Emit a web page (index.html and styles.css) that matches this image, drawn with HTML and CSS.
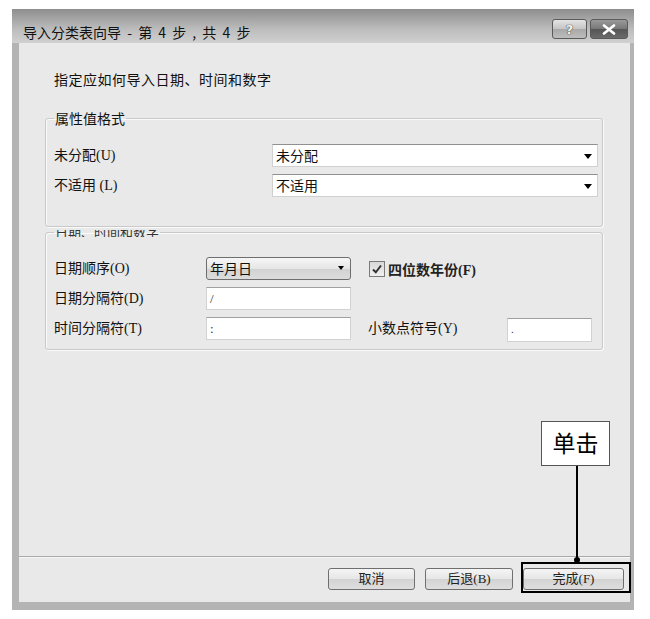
FILE: index.html
```html
<!DOCTYPE html>
<html lang="zh-CN">
<head>
<meta charset="utf-8">
<title>导入分类表向导</title>
<link rel="stylesheet" href="styles.css">
</head>
<body>
<div class="window">
  <div class="titlebar">
    <span class="title">导入分类表向导 - 第 4 步 , 共 4 步</span>
    <div class="title-btns">
      <span class="tbtn help">?</span>
      <span class="tbtn close"><svg width="14" height="11" viewBox="0 0 14 11"><path d="M2 1.5 L12 9.5 M12 1.5 L2 9.5" stroke="#fff" stroke-width="2.6" stroke-linecap="round"/></svg></span>
    </div>
  </div>
  <div class="content">
    <div class="main">
      <p class="heading">指定应如何导入日期、时间和数字</p>
      <fieldset class="group g1">
        <legend>属性值格式</legend>
        <div class="rows">
          <span class="label">未分配(U)</span>
          <div class="select">未分配<span class="arrow"></span></div>
          <span class="label">不适用 (L)</span>
          <div class="select">不适用<span class="arrow"></span></div>
        </div>
      </fieldset>
      <fieldset class="group g2">
        <legend><span class="clipped">日期、时间和数字</span></legend>
        <div class="grid">
          <span class="label">日期顺序(O)</span>
          <div class="combo">年月日<span class="arrow small"></span></div>
          <div class="check-wrap">
            <span class="checkbox"><svg width="12" height="12" viewBox="0 0 12 12"><path d="M2 6.5 L4.8 9.3 L10 2.5" fill="none" stroke="#333" stroke-width="2"/></svg></span>
            <span class="check-label">四位数年份(F)</span>
          </div>
          <span class="label">日期分隔符(D)</span>
          <div class="input">/</div>
          <span class="empty"></span>
          <span class="label">时间分隔符(T)</span>
          <div class="input">:</div>
          <span class="label col3">小数点符号(Y)</span>
          <div class="input dec">.</div>
        </div>
      </fieldset>
    </div>
    <div class="footer">
      <button class="btn w87">取消</button>
      <button class="btn w88">后退(B)</button>
      <button class="btn w101">完成(F)</button>
    </div>
  </div>
</div>
<div class="callout-box">单击</div>
<div class="callout-line"></div>
<div class="callout-dot"></div>
<div class="highlight"></div>
</body>
</html>
```
FILE: styles.css
```css
html, body {
  margin: 0;
  padding: 0;
  background: #ffffff;
}
body {
  font-family: "Liberation Serif", "Noto Sans CJK SC", serif;
  color: #111;
  width: 650px;
  height: 619px;
  position: relative;
  overflow: hidden;
}
.window {
  margin: 9px 0 0 12px;
  width: 622px;
  height: 601px;
  box-sizing: border-box;
  background: #b4b4b4;
  padding: 0 4px 8px 7px;
  display: flex;
  flex-direction: column;
}
.titlebar {
  height: 34px;
  flex: none;
  margin: 0 -4px 0 -7px;
  padding: 0 6px 0 11px;
  background: linear-gradient(#8e8e8e, #bdbdbd 60%, #d0d0d0);
  display: flex;
  justify-content: space-between;
  align-items: flex-start;
}
.title {
  font-family: "Noto Sans CJK SC", sans-serif;
  font-size: 14px;
  line-height: 20px;
  margin-top: 13px;
  color: #111;
  word-spacing: 3px;
}
.title-btns {
  display: flex;
  gap: 3px;
  margin-top: 10px;
}
.tbtn {
  height: 20px;
  box-sizing: border-box;
  border: 1px solid #5a5a5a;
  border-radius: 3px;
  display: flex;
  align-items: center;
  justify-content: center;
}
.help {
  width: 35px;
  background: linear-gradient(#e4e4e4, #c4c4c4 50%, #a8a8a8 51%, #bdbdbd);
  font-family: "DejaVu Sans", sans-serif;
  font-weight: bold;
  font-size: 13px;
  color: #f4f4f4;
  text-shadow: 0 0 1px #333, 0 0 1px #333;
}
.close {
  width: 38px;
  background: linear-gradient(#9a9a9a, #777 50%, #555 51%, #6a6a6a);
}
.content {
  flex: 1;
  background: #e9e9e9;
  display: flex;
  flex-direction: column;
}
.main {
  flex: 1;
  padding: 0 27px 0 26px;
}
.heading {
  margin: 26px 0 0 9px;
  font-family: "Noto Sans CJK SC", sans-serif;
  font-size: 14px;
  line-height: 20px;
  letter-spacing: 0.5px;
}
.group {
  margin: 0;
  min-width: 0;
  border: 1px solid #c9c9c9;
  border-radius: 3px;
  box-shadow: inset 1px 1px 0 #fafafa, 1px 1px 0 #fafafa;
  font-size: 14px;
}
.group legend {
  padding: 0 1px;
  font-family: "Noto Sans CJK SC", sans-serif;
  font-size: 14px;
  line-height: 20px;
}
.g1 {
  margin-top: 19px;
  padding: 16px 5px 29px 8px;
}
.g2 {
  padding: 20px 5px 9px 8px;
}
.g2 legend {
  line-height: 10px;
  height: 10px;
  font-size: 13px;
  color: #333;
}
.clipped {
  display: inline-block;
  clip-path: inset(3px 0 0 0);
}
.rows {
  display: grid;
  grid-template-columns: 218px 326px;
  grid-auto-rows: 23px;
  row-gap: 7px;
  align-items: center;
}
.label {
  font-size: 14px;
  line-height: 20px;
}
.select {
  height: 23px;
  box-sizing: border-box;
  background: #fff;
  border: 1px solid #d0d0d0;
  border-top-color: #909090;
  padding-left: 3px;
  font-family: "Noto Sans CJK SC", sans-serif;
  font-size: 14px;
  line-height: 21px;
  position: relative;
}
.arrow {
  position: absolute;
  right: 5px;
  top: 9px;
  width: 0;
  height: 0;
  border-left: 4px solid transparent;
  border-right: 4px solid transparent;
  border-top: 5px solid #000;
}
.arrow.small {
  right: 6px;
  top: 8px;
  border-left-width: 3.5px;
  border-right-width: 3.5px;
  border-top-width: 4px;
}
.grid {
  display: grid;
  grid-template-columns: 152px 145px 156px 85px;
  grid-auto-rows: 23px;
  row-gap: 7px;
  align-items: center;
}
.combo {
  height: 23px;
  box-sizing: border-box;
  border: 1px solid #6e6e6e;
  border-radius: 3px;
  background: linear-gradient(#f6f6f6, #e6e6e6 50%, #d2d2d2 51%, #dcdcdc);
  padding-left: 3px;
  font-family: "Noto Sans CJK SC", sans-serif;
  font-size: 14px;
  line-height: 21px;
  position: relative;
}
.check-wrap {
  grid-column: 3 / 5;
  display: flex;
  align-items: center;
  padding-left: 18px;
  gap: 3px;
}
.empty {
  grid-column: 3 / 5;
}
.checkbox {
  width: 16px;
  height: 16px;
  box-sizing: border-box;
  border: 1px solid #7a7a7a;
  background: linear-gradient(#d8d8d8, #f0f0f0);
  display: flex;
  align-items: center;
  justify-content: center;
}
.check-label {
  font-size: 14px;
  font-weight: bold;
  color: #222;
}
.input {
  height: 23px;
  box-sizing: border-box;
  background: #fff;
  border: 1px solid #d2d2d2;
  border-top-color: #a0a0a0;
  padding-left: 3px;
  font-size: 13px;
  line-height: 21px;
  color: #333;
}
.col3 {
  padding-left: 17px;
}
.input.dec {
  margin-top: 3px;
  height: 24px;
  font-size: 11px;
}
.footer {
  flex: none;
  height: 46px;
  box-sizing: border-box;
  border-top: 1px solid #a9a9a9;
  box-shadow: inset 0 1px 0 #f6f6f6;
  display: flex;
  justify-content: flex-end;
  align-items: flex-start;
  gap: 10px;
  padding: 11px 6px 0 0;
}
.btn {
  height: 22px;
  box-sizing: border-box;
  border: 1px solid #6f6f6f;
  border-radius: 3px;
  background: linear-gradient(#f5f5f5, #e6e6e6 50%, #d3d3d3 51%, #dedede);
  font-family: "Liberation Serif", "Noto Sans CJK SC", serif;
  font-size: 13px;
  line-height: 18px;
  color: #222;
  padding: 0;
}
.w87 { width: 87px; }
.w88 { width: 88px; }
.w101 { width: 101px; }
.callout-box {
  position: absolute;
  left: 541px;
  top: 421px;
  width: 69px;
  height: 45px;
  box-sizing: border-box;
  border: 1px solid #555;
  background: #fff;
  font-family: "Noto Sans CJK SC", sans-serif;
  font-size: 23px;
  line-height: 41px;
  text-align: center;
  color: #000;
}
.callout-line {
  position: absolute;
  left: 576px;
  top: 466px;
  width: 2px;
  height: 95px;
  background: #000;
}
.callout-dot {
  position: absolute;
  left: 574px;
  top: 557px;
  width: 6px;
  height: 6px;
  border-radius: 50%;
  background: #000;
}
.highlight {
  position: absolute;
  left: 521px;
  top: 562px;
  width: 110px;
  height: 31px;
  box-sizing: border-box;
  border: 2px solid #000;
}
```
